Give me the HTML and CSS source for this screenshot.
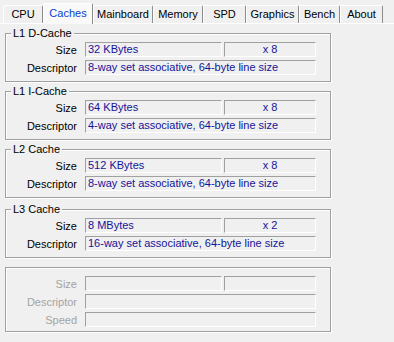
FILE: index.html
```html
<!DOCTYPE html>
<html lang="en">
<head>
  <meta charset="UTF-8" />
  <title>Caches</title>
  <link rel="stylesheet" href="styles.css">
</head>
<body>
  <div class="tabs">
    <div class="tab t-cpu">CPU</div>
    <div class="tab t-caches active">Caches</div>
    <div class="tab t-mainboard">Mainboard</div>
    <div class="tab t-memory">Memory</div>
    <div class="tab t-spd">SPD</div>
    <div class="tab t-graphics">Graphics</div>
    <div class="tab t-bench">Bench</div>
    <div class="tab t-about">About</div>
  </div>

  <div class="panel">
    <div class="group">
      <div class="legend">L1 D-Cache</div>
      <div class="rows">
        <div class="row"><span class="label">Size</span><span class="field size">32 KBytes</span><span class="field ways">x 8</span></div>
        <div class="row"><span class="label">Descriptor</span><span class="field wide">8-way set associative, 64-byte line size</span></div>
      </div>
    </div>

    <div class="group">
      <div class="legend">L1 I-Cache</div>
      <div class="rows">
        <div class="row"><span class="label">Size</span><span class="field size">64 KBytes</span><span class="field ways">x 8</span></div>
        <div class="row"><span class="label">Descriptor</span><span class="field wide">4-way set associative, 64-byte line size</span></div>
      </div>
    </div>

    <div class="group">
      <div class="legend">L2 Cache</div>
      <div class="rows">
        <div class="row"><span class="label">Size</span><span class="field size">512 KBytes</span><span class="field ways">x 8</span></div>
        <div class="row"><span class="label">Descriptor</span><span class="field wide">8-way set associative, 64-byte line size</span></div>
      </div>
    </div>

    <div class="group spaced">
      <div class="legend">L3 Cache</div>
      <div class="rows">
        <div class="row"><span class="label">Size</span><span class="field size">8 MBytes</span><span class="field ways">x 2</span></div>
        <div class="row"><span class="label">Descriptor</span><span class="field wide">16-way set associative, 64-byte line size</span></div>
      </div>
    </div>

    <div class="group empty">
      <div class="legend"></div>
      <div class="rows">
        <div class="row"><span class="label">Size</span><span class="field size"></span><span class="field ways"></span></div>
        <div class="row"><span class="label">Descriptor</span><span class="field wide"></span></div>
        <div class="row"><span class="label">Speed</span><span class="field wide"></span></div>
      </div>
    </div>
  </div>
</body>
</html>
```

FILE: styles.css
```css
* {
  box-sizing: border-box;
}
body {
  margin: 0;
  width: 394px;
  height: 342px;
  background: #f0f0f0;
  font-family: "Liberation Sans", Arial, sans-serif;
  font-size: 11px;
  color: #000;
  overflow: hidden;
}
.tabs {
  display: flex;
  align-items: flex-end;
  height: 23px;
  padding-left: 3px;
}
.tab {
  height: 18px;
  line-height: 17px;
  text-align: center;
  border-top: 1px solid #fff;
  border-left: 1px solid #fff;
  border-right: 1px solid #8c8c8c;
  border-radius: 2px 2px 0 0;
  white-space: nowrap;
}
.tab.active {
  height: 21px;
  line-height: 19px;
  margin-bottom: -1px;
  background: #f9f9f9;
  color: #0a3cd6;
}
.t-cpu { width: 40px; }
.t-caches { width: 50px; }
.t-mainboard { width: 60px; }
.t-memory { width: 50px; }
.t-spd { width: 43px; }
.t-graphics { width: 53px; }
.t-bench { width: 41px; }
.t-about { width: 43px; }
.panel {
  border-top: 1px solid #fff;
  padding-left: 5px;
}
.group {
  width: 326px;
  margin-top: 9px;
  border: 1px solid #a0a0a0;
  box-shadow: 1px 1px 0 #fff, inset 1px 1px 0 #fff;
  padding-bottom: 6px;
}
.group.spaced {
  margin-top: 11px;
}
.group.empty {
  padding-bottom: 4px;
}
.legend {
  width: fit-content;
  height: 13px;
  line-height: 13px;
  margin: -7px 0 0 5px;
  padding: 0 2px;
  background: #f0f0f0;
}
.legend:empty {
  visibility: hidden;
}
.rows {
  padding-top: 2px;
  display: flex;
  flex-direction: column;
  gap: 3px;
}
.row {
  display: flex;
  align-items: center;
  height: 15px;
}
.label {
  width: 71px;
  margin-right: 8px;
  text-align: right;
}
.field {
  height: 15px;
  line-height: 13px;
  padding-left: 2px;
  border-top: 1px solid #a0a0a0;
  border-left: 1px solid #a0a0a0;
  border-bottom: 1px solid #fff;
  border-right: 1px solid #fff;
  color: #14149a;
  white-space: nowrap;
  overflow: hidden;
}
.field.size {
  width: 137px;
}
.field.ways {
  width: 92px;
  margin-left: 2px;
  text-align: center;
  padding-left: 0;
}
.field.wide {
  width: 231px;
}
.empty .label {
  color: #a3a3a3;
}
```
